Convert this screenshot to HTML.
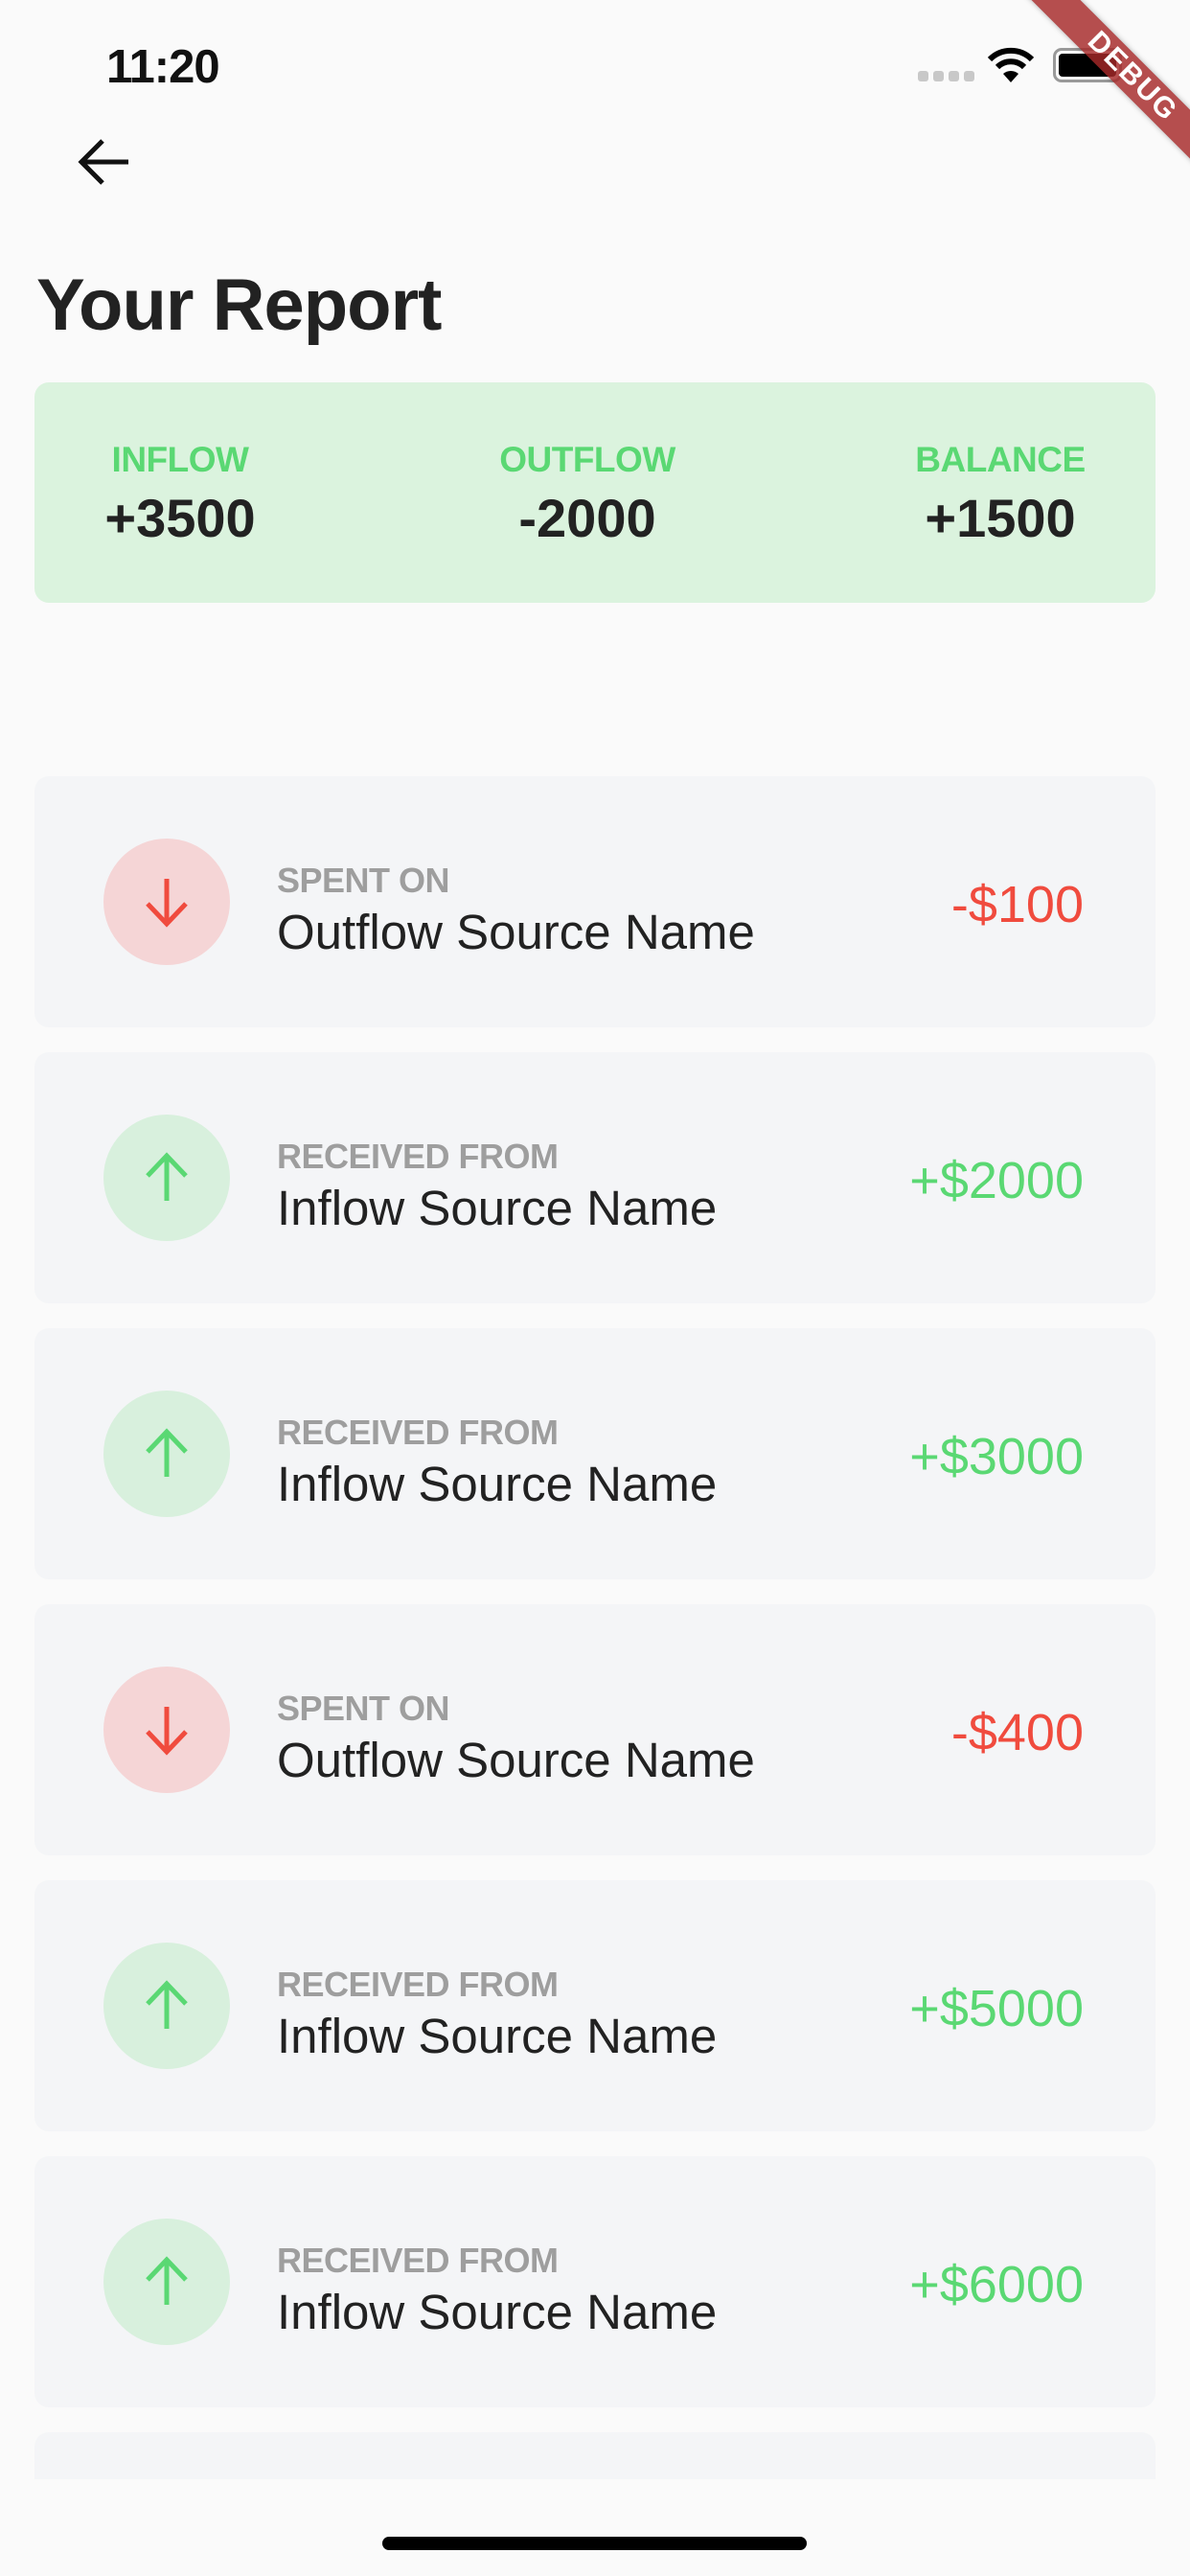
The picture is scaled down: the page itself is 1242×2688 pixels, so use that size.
<!DOCTYPE html>
<html><head><meta charset="utf-8"><style>
*{margin:0;padding:0;box-sizing:border-box}
body{width:1242px;height:2688px;background:#fafafa;font-family:"Liberation Sans",sans-serif;position:relative;overflow:hidden;color:#222}
.abs{position:absolute}
.time{left:111px;top:42px;font-size:49px;font-weight:bold;color:#111;letter-spacing:-1px}
.title{left:38px;top:275px;font-size:76px;font-weight:bold;color:#222;letter-spacing:-1px}
.sum{left:36px;top:399px;width:1170px;height:230px;background:#dbf3de;border-radius:15px}
.col{position:absolute;top:60px;text-align:center;width:300px}
.col .l{font-size:37px;font-weight:bold;color:#5ad873;letter-spacing:-.5px}
.col .v{font-size:56px;font-weight:bold;color:#222;margin-top:7px}
.card{position:absolute;left:36px;width:1170px;height:262px;background:#f4f5f7;border-radius:15px}
.circ{position:absolute;left:72px;top:65px;width:132px;height:132px;border-radius:50%}
.red .circ{background:#f5d5d6}.grn .circ{background:#d8f0dd}
.lab{position:absolute;left:253px;top:88px;font-size:36px;font-weight:bold;color:#9e9e9e;letter-spacing:-.5px}
.nm{position:absolute;left:253px;top:133px;font-size:51px;color:#222}
.amt{position:absolute;right:75px;top:103px;font-size:54px}
.red .amt{color:#f04b3e}.grn .amt{color:#5ad873}
.circ svg{position:absolute;left:36px;top:36px}
</style></head><body>
<div class="abs time">11:20</div>
<div class="abs" style="left:958px;top:74px;display:flex;gap:5px">
<div style="width:11px;height:11px;border-radius:3px;background:#c8c8c8"></div><div style="width:11px;height:11px;border-radius:3px;background:#c8c8c8"></div><div style="width:11px;height:11px;border-radius:3px;background:#c8c8c8"></div><div style="width:11px;height:11px;border-radius:3px;background:#c8c8c8"></div></div>
<svg class="abs" style="left:1030px;top:48px" width="50" height="38" viewBox="0 0 50 38"><path d="M25 38 L17 29 A12 12 0 0 1 33 29 Z" fill="#000"/><path d="M11 22 A20 20 0 0 1 39 22" stroke="#000" stroke-width="6" fill="none"/><path d="M3 14 A31 31 0 0 1 47 14" stroke="#000" stroke-width="6" fill="none"/></svg>
<div class="abs" style="left:1099px;top:50px;width:72px;height:36px;border:3px solid #999;border-radius:9px;padding:3px"><div style="width:100%;height:100%;background:#000;border-radius:4px"></div></div>
<div class="abs" style="left:1032px;top:62px;width:300px;height:36px;background:rgba(166,40,40,.82);transform:rotate(45deg);color:#fff;font-weight:bold;font-size:30px;text-align:center;line-height:36px;letter-spacing:2px;box-shadow:0 0 6px rgba(0,0,0,.3)">DEBUG</div>
<svg class="abs" style="left:80px;top:143px" width="56" height="52" viewBox="0 0 56 52"><path d="M54 26 H6 M27 4 L5 26 L27 48" stroke="#111" stroke-width="5" fill="none"/></svg>
<div class="abs title">Your Report</div>
<div class="abs sum">
<div class="col" style="left:2px"><div class="l">INFLOW</div><div class="v">+3500</div></div>
<div class="col" style="left:427px"><div class="l">OUTFLOW</div><div class="v">-2000</div></div>
<div class="col" style="left:858px"><div class="l">BALANCE</div><div class="v">+1500</div></div>
</div>
<div class="card red" style="top:810px"><div class="circ"><svg width="60" height="60" viewBox="0 0 60 60"><path d="M30 6 V52 M10 32 L30 53 L50 32" stroke="#f04b3e" stroke-width="5" fill="none"/></svg></div><div class="lab">SPENT ON</div><div class="nm">Outflow Source Name</div><div class="amt">-$100</div></div>
<div class="card grn" style="top:1098px"><div class="circ"><svg width="60" height="60" viewBox="0 0 60 60"><path d="M30 54 V8 M10 28 L30 7 L50 28" stroke="#5ad873" stroke-width="5" fill="none"/></svg></div><div class="lab">RECEIVED FROM</div><div class="nm">Inflow Source Name</div><div class="amt">+$2000</div></div>
<div class="card grn" style="top:1386px"><div class="circ"><svg width="60" height="60" viewBox="0 0 60 60"><path d="M30 54 V8 M10 28 L30 7 L50 28" stroke="#5ad873" stroke-width="5" fill="none"/></svg></div><div class="lab">RECEIVED FROM</div><div class="nm">Inflow Source Name</div><div class="amt">+$3000</div></div>
<div class="card red" style="top:1674px"><div class="circ"><svg width="60" height="60" viewBox="0 0 60 60"><path d="M30 6 V52 M10 32 L30 53 L50 32" stroke="#f04b3e" stroke-width="5" fill="none"/></svg></div><div class="lab">SPENT ON</div><div class="nm">Outflow Source Name</div><div class="amt">-$400</div></div>
<div class="card grn" style="top:1962px"><div class="circ"><svg width="60" height="60" viewBox="0 0 60 60"><path d="M30 54 V8 M10 28 L30 7 L50 28" stroke="#5ad873" stroke-width="5" fill="none"/></svg></div><div class="lab">RECEIVED FROM</div><div class="nm">Inflow Source Name</div><div class="amt">+$5000</div></div>
<div class="card grn" style="top:2250px"><div class="circ"><svg width="60" height="60" viewBox="0 0 60 60"><path d="M30 54 V8 M10 28 L30 7 L50 28" stroke="#5ad873" stroke-width="5" fill="none"/></svg></div><div class="lab">RECEIVED FROM</div><div class="nm">Inflow Source Name</div><div class="amt">+$6000</div></div>
<div class="card" style="top:2538px;height:49px;border-radius:15px 15px 0 0"></div>
<div class="abs" style="left:399px;top:2647px;width:443px;height:14px;border-radius:7px;background:#000"></div>
</body></html>
